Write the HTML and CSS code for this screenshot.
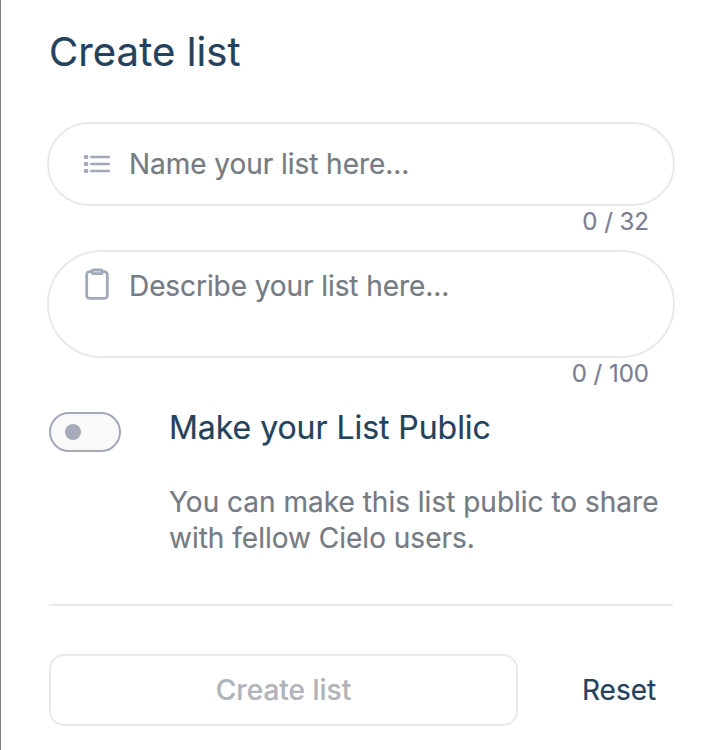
FILE: index.html
```html
<!DOCTYPE html>
<html lang="en">
<head>
<meta charset="utf-8">
<title>Create list</title>
<link rel="stylesheet" href="styles.css">
</head>
<body>
<main class="panel">
  <h1 class="title">Create list</h1>
  <div class="field field-name">
    <svg class="icon" width="30" height="30" viewBox="0 0 30 30" fill="#a1a9ba"><rect x="2" y="6" width="4.2" height="4" rx="1.3"/><rect x="2" y="13" width="4.2" height="4" rx="1.3"/><rect x="2" y="20" width="4.2" height="4" rx="1.3"/><rect x="8" y="6.8" width="20" height="2.4" rx="1.2"/><rect x="8" y="13.8" width="20" height="2.4" rx="1.2"/><rect x="8" y="20.8" width="20" height="2.4" rx="1.2"/></svg>
    <span class="placeholder name-text">Name your list here...</span>
  </div>
  <div class="counter">0 / 32</div>
  <div class="field field-desc">
    <svg class="icon" width="30" height="34" viewBox="0 0 30 34" fill="none" stroke="#a1a9ba" stroke-width="2.8"><rect x="4.7" y="3.6" width="20.6" height="26.8" rx="3"/><rect x="10" y="1.8" width="10.4" height="4" rx="1.6" fill="#cdd1da" stroke-width="2.4"/></svg>
    <span class="placeholder desc-text">Describe your list here...</span>
  </div>
  <div class="counter">0 / 100</div>
  <section class="public">
    <div class="toggle"><span class="knob"></span></div>
    <div>
      <h2 class="subtitle">Make your List Public</h2>
      <p class="hint">You can make this list public to share<br>with fellow Cielo users.</p>
    </div>
  </section>
  <footer class="actions">
    <button class="create">Create list</button>
    <button class="reset">Reset</button>
  </footer>
</main>
</body>
</html>
```

FILE: styles.css
```css
* { box-sizing: border-box; }
body { margin: 0; background: #fff; font-family: Inter, sans-serif; color: #757b83; -webkit-text-stroke: 0.2px currentColor; }
.panel { height: 750px; overflow: hidden; border-left: 1px solid #808083; padding: 28px 31px 0 46px; }
.title { margin: 0 0 46px 2px; font-size: 40px; line-height: 48px; font-weight: 400; letter-spacing: 0.1px; color: #24425c; }
.field { display: flex; width: 628px; border: 2px solid #e9e9ea; padding-left: 33px; gap: 17px; font-size: 28px; line-height: 36px; }
.field-name { height: 84px; border-radius: 42px; align-items: center; }
.field-desc { height: 108px; border-radius: 54px; padding-top: 16px; margin-top: 12px; }
.icon { flex: none; }
.name-text { letter-spacing: -0.05px; }
.desc-text { letter-spacing: -0.08px; }
.counter { height: 32px; line-height: 32px; font-size: 24px; text-align: right; padding-right: 26px; color: #7b7e93; }
.public { display: flex; gap: 48px; margin: 22px 2px 0; padding-bottom: 48px; border-bottom: 2px solid #e9e9ea; }
.toggle { width: 72px; height: 40px; flex: none; border: 2px solid #a1a9ba; border-radius: 20px; background: #f9f9f9; display: flex; align-items: center; padding-left: 14px; }
.knob { width: 16px; height: 16px; border-radius: 50%; background: #a5abba; }
.subtitle { margin: -4px 0 36px; font-size: 32px; line-height: 40px; font-weight: 400; letter-spacing: -0.05px; color: #24425c; }
.hint { margin: 0; font-size: 28px; line-height: 36px; white-space: nowrap; }
.actions { display: flex; margin: 48px 0 0 2px; }
button { font-family: inherit; font-size: 28px; padding: 0; background: #fff; -webkit-text-stroke: inherit; }
.create { width: 469px; height: 72px; border: 2px solid #e9e9ea; border-radius: 15px; color: #b0b4bb; font-weight: 500; -webkit-text-stroke: 0.2px #b0b4bb; }
.reset { border: 0; margin-left: 64px; color: #24425c; -webkit-text-stroke: 0.2px #24425c; }
```
